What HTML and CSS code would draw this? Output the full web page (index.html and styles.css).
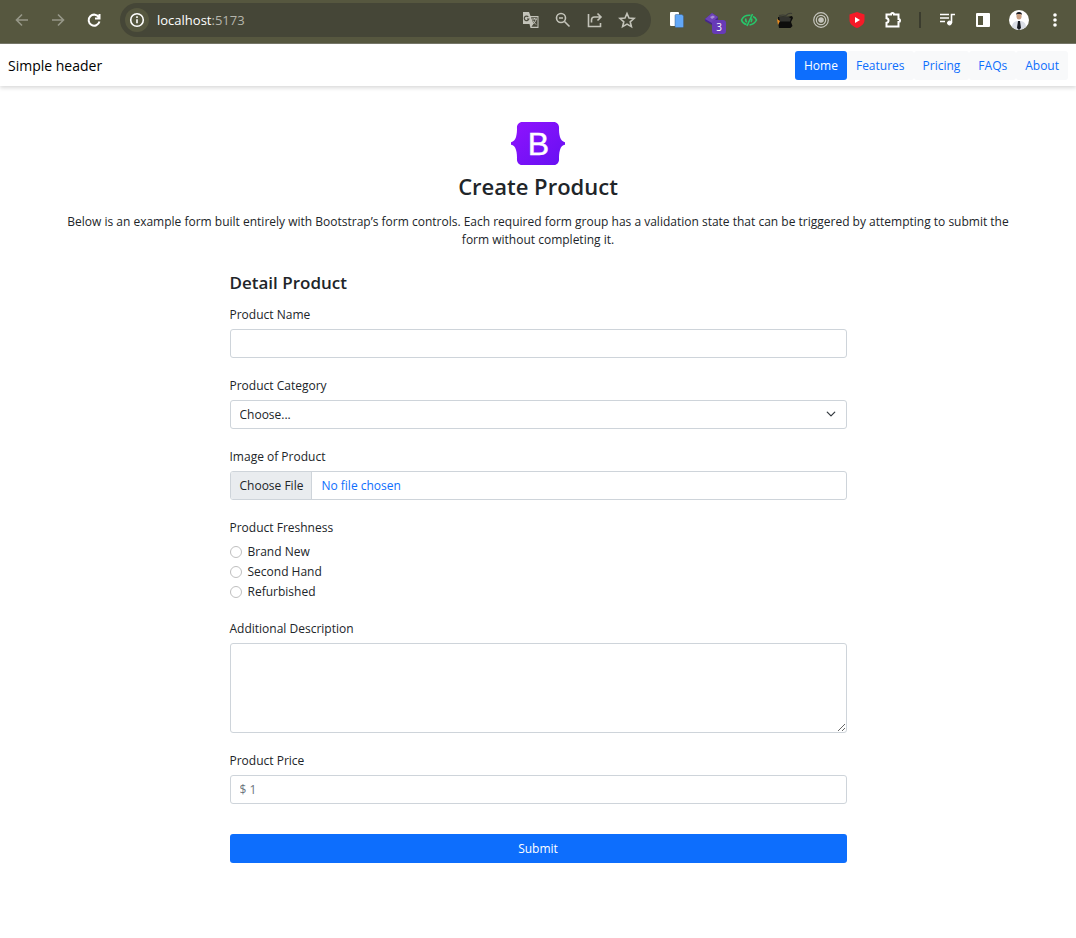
FILE: index.html
```html
<!DOCTYPE html>
<html lang="en">
<head>
<meta charset="utf-8">
<title>Create Product</title>
<link rel="stylesheet" href="styles.css">
</head>
<body>
<div class="browser">
  <div class="browser-nav">
    <button class="icon-btn dim" aria-label="Back"><svg width="16" height="16" viewBox="0 0 16 16"><path d="M14 8H3M8 2.500 2.500 8 8 13.500"/></svg></button>
    <button class="icon-btn dim" aria-label="Forward"><svg width="16" height="16" viewBox="0 0 16 16"><path d="M2 8h11M8 2.500 13.500 8 8 13.500"/></svg></button>
    <button class="icon-btn" aria-label="Reload"><svg width="16" height="16" viewBox="0 0 16 16" class="heavy"><path d="M13 5.500A5.500 5.500 0 1 0 13.500 9.500M13.500 2v4.500H9"/></svg></button>
  </div>
  <div class="omnibox">
    <button class="site-info" aria-label="Site information"><svg width="16" height="16" viewBox="0 0 16 16"><circle cx="8" cy="8" r="6.300"/><path d="M8 7.200v4M8 4.300v1.700"/></svg></button>
    <span class="url">localhost<span class="port">:5173</span></span>
    <div class="omnibox-tools">
      <button class="icon-btn soft" aria-label="Translate"><svg width="18" height="18" viewBox="0 0 18 18"><path d="M1 1h6l1.500 4H16.500v12h-8l-1-4H1z" fill="#c3c3b9" stroke="none"/><path d="M9 6.200h6.500v9.600H9.500l2-3z" fill="#4b4b3d" stroke="none"/><path d="M6.300 5.800A2.300 2.300 0 1 0 6.800 8H5" stroke="#4b4b3d" stroke-width="1.200"/><path d="M10 8h5M12.500 7v1M14.200 8c-.5 2.500-2 4-3.500 5M11 9.500c1 2 2 3 3 4" stroke-width="1"/></svg></button>
      <button class="icon-btn soft" aria-label="Zoom"><svg width="18" height="18" viewBox="0 0 18 18"><circle cx="7" cy="7" r="4.500"/><path d="m10.500 10.500 5 5M5 7h4"/></svg></button>
      <button class="icon-btn soft" aria-label="Share"><svg width="18" height="18" viewBox="0 0 18 18"><path d="M2.500 3v12.500h12V12M5.500 11.500V9q0-3 3-3h6M11.500 2.500 15 6l-3.500 3.500"/></svg></button>
      <button class="icon-btn soft" aria-label="Bookmark"><svg width="18" height="18" viewBox="0 0 18 18"><path d="m9 2.500 2 4.600 5 .4-3.800 3.300 1.200 4.900L9 13.100l-4.400 2.600 1.200-4.900L2 7.500l5-.4z"/></svg></button>
    </div>
  </div>
  <div class="extensions">
    <button class="icon-btn" aria-label="Copy pages"><svg width="18" height="18" viewBox="0 0 18 18" stroke="none"><rect x="2" y="1" width="9" height="14" rx="1" fill="#fff"/><path d="M8 3.500h6l1.500 1.500v10.500a1 1 0 0 1-1 1H8a1 1 0 0 1-1-1v-11a1 1 0 0 1 1-1z" fill="#62a8f8" stroke="#3f5f85" stroke-width=".5"/></svg></button>
    <button class="icon-btn badge-host" aria-label="Extension, 3 items"><svg width="18" height="18" viewBox="0 0 18 18" stroke="none"><path d="m1 8 7-6 6 4v5l-6 3-7-4z" fill="#45278a"/><path d="m1 8 7-6 6 4-6 6z" fill="#6d43b8"/><path d="m6 6 3-1.500L11 6 8 8z" fill="#a58cd4"/></svg><span class="badge">3</span></button>
    <button class="icon-btn" aria-label="Visibility"><svg width="18" height="18" viewBox="0 0 18 18" stroke="#27c66b"><path d="M6.500 13.500C4 13 2 10.500 1.500 9 3 5.500 6.500 4 10.500 4.300M13 5.500c2 .8 3 2.300 3.500 3.500-1.500 3-4 4.500-7 5M12.500 3 7 15M6 7.500q-1 2.500 1 3.500M11.500 7.500q1 1.500-.5 3.500"/></svg></button>
    <button class="icon-btn" aria-label="Dark animal"><svg width="18" height="18" viewBox="0 0 18 18" stroke="none"><path d="M3 4.500q4-1 7 0 3-3 6-2" stroke="#3a3b35" stroke-width="1.200"/><path d="M2 6q6-1 9 0l5-1 1 2-2 4 1.500 4-2 2H3l-1-6z" fill="#0d0d0c"/><path d="M3 5.500h9l3 2-1 3H4z" fill="#33342f"/><path d="m1 8 3 2-2 4z" fill="#e68a20"/></svg></button>
    <button class="icon-btn" aria-label="Target"><svg width="18" height="18" viewBox="0 0 18 18" stroke="#c5c5bd" class="thin"><circle cx="9" cy="9" r="7.300"/><circle cx="9" cy="9" r="4.700"/><circle cx="9" cy="9" r="2.200" fill="#c5c5bd"/></svg></button>
    <button class="icon-btn" aria-label="Video"><svg width="18" height="18" viewBox="0 0 18 18" stroke="none"><path d="m9 1 7.500 2.500V9c0 4-3.500 6.500-7.500 8-4-1.500-7.500-4-7.500-8V3.500z" fill="#f51a28"/><path d="m7 6 5 3-5 3z" fill="#fff"/></svg></button>
    <button class="icon-btn" aria-label="Extensions"><svg width="18" height="18" viewBox="0 0 18 18" class="heavy"><path d="M2.500 3.500H7a1.500 1.500 0 0 1 3 0h4.500v4.500a1.500 1.500 0 0 1 0 3v4.500h-12v-3.700q2-.3 2-2.300t-2-2.300z"/></svg></button>
    <span class="divider"></span>
    <button class="icon-btn" aria-label="Media"><svg width="18" height="18" viewBox="0 0 18 18"><path d="M2 3.500h9M2 7h9M2 10.500h5M13.500 12V3.500H17"/><circle cx="11.500" cy="12" r="2" fill="#fff" stroke-width="1"/></svg></button>
    <button class="icon-btn" aria-label="Side panel"><svg width="18" height="18" viewBox="0 0 18 18" stroke="none"><path d="M3 2h12a1 1 0 0 1 1 1v12a1 1 0 0 1-1 1H3a1 1 0 0 1-1-1V3a1 1 0 0 1 1-1zm1 3v9h5V5z" fill="#fff" fill-rule="evenodd"/></svg></button>
    <button class="icon-btn" aria-label="Profile"><svg width="20" height="20" viewBox="0 0 20 20" stroke="none"><circle cx="10" cy="10" r="10" fill="#fff"/><path d="M3 17q0-5 5-6h4q5 1 5 6a10 10 0 0 1-14 0z" fill="#d9dde5"/><ellipse cx="10" cy="6" rx="2.600" ry="3.500" fill="#c89f83"/><path d="M7 5q0-3 3-3t3 3l-1-1H8zM9 11h2l1 7-2 2-2-2z" fill="#171a21"/></svg></button>
    <button class="icon-btn" aria-label="Menu"><svg width="18" height="18" viewBox="0 0 18 18" stroke="none"><path d="M9 2.200a1.800 1.800 0 1 1 0 3.600a1.800 1.800 0 1 1 0-3.600zM9 7.200a1.800 1.800 0 1 1 0 3.600a1.800 1.800 0 1 1 0-3.600zM9 12.200a1.800 1.800 0 1 1 0 3.600a1.800 1.800 0 1 1 0-3.600z" fill="#fff"/></svg></button>
  </div>
</div>

<header class="site-header">
  <a class="brand" href="#">Simple header</a>
  <nav class="site-nav">
    <a class="nav-link active" href="#">Home</a>
    <a class="nav-link" href="#">Features</a>
    <a class="nav-link" href="#">Pricing</a>
    <a class="nav-link" href="#">FAQs</a>
    <a class="nav-link" href="#">About</a>
  </nav>
</header>

<main class="page">
  <div class="intro">
    <svg class="logo" viewBox="0 0 118 94" role="img" aria-label="Bootstrap">
      <defs><linearGradient id="violet" x1="0" y1="0" x2="1" y2="1"><stop offset="0" stop-color="#9013fe"/><stop offset="1" stop-color="#6610f2"/></linearGradient></defs>
      <path fill="url(#violet)" d="M24.509 0c-6.733 0-11.715 5.893-11.492 12.284.214 6.140-.064 14.092-2.066 20.577C8.943 39.365 5.547 43.485 0 44.014v5.972c5.547.529 8.943 4.649 10.951 11.153 2.002 6.485 2.280 14.437 2.066 20.577C12.794 88.106 17.776 94 24.510 94H93.500c6.733 0 11.714-5.893 11.491-12.284-.214-6.140.064-14.092 2.066-20.577 2.009-6.504 5.396-10.624 10.943-11.153v-5.972c-5.547-.529-8.934-4.649-10.943-11.153-2.002-6.484-2.280-14.437-2.066-20.577C105.214 5.894 100.233 0 93.500 0z"/>
      <text class="logo-letter" x="60" y="72" text-anchor="middle">B</text>
    </svg>
    <h1>Create Product</h1>
    <p>Below is an example form built entirely with Bootstrap’s form controls. Each required form group has a validation state that can be triggered by attempting to submit the form without completing it.</p>
  </div>

  <form class="product-form">
    <h2>Detail Product</h2>
    <div class="field">
      <label class="caption" for="name">Product Name</label>
      <input class="control" id="name" type="text">
    </div>
    <div class="field">
      <label class="caption" for="category">Product Category</label>
      <div class="select-wrap">
        <select class="control" id="category"><option>Choose...</option></select>
        <svg class="chevron" viewBox="0 0 16 16" aria-hidden="true"><path d="m2 5 6 6 6-6"/></svg>
      </div>
    </div>
    <div class="field">
      <label class="caption" for="image">Image of Product</label>
      <input class="control file" id="image" type="file">
    </div>
    <fieldset class="field">
      <legend class="caption">Product Freshness</legend>
      <div class="choices">
        <label class="choice"><input type="radio" name="freshness">Brand New</label>
        <label class="choice"><input type="radio" name="freshness">Second Hand</label>
        <label class="choice"><input type="radio" name="freshness">Refurbished</label>
      </div>
    </fieldset>
    <div class="field">
      <label class="caption" for="description">Additional Description</label>
      <textarea class="control area" id="description"></textarea>
    </div>
    <div class="field">
      <label class="caption" for="price">Product Price</label>
      <input class="control price" id="price" type="text" placeholder="$ 1">
    </div>
    <button class="submit" type="submit">Submit</button>
  </form>
</main>
</body>
</html>
```
FILE: styles.css
```css
* { box-sizing: border-box; }

body {
  margin: 0;
  background: #fff;
  color: #212529;
  font: 12px/18px "Open Sans", "Noto Sans", sans-serif;
}

button, input, select, textarea { font: inherit; color: inherit; }

.browser {
  display: flex;
  align-items: center;
  height: 44px;
  padding: 0 11px 4px 12px;
  background: #56573f;
  border-bottom: 1px solid #77786a;
}

.browser-nav { display: flex; gap: 16px; }

.icon-btn {
  display: flex;
  align-items: center;
  justify-content: center;
  width: 20px;
  height: 20px;
  padding: 0;
  border: 0;
  background: none;
  stroke: #fff;
}

.icon-btn svg, .site-info svg { fill: none; stroke-width: 1.6; flex: none; }
.icon-btn svg.heavy { stroke-width: 2; }
.icon-btn svg.thin { stroke-width: 1.2; }
.icon-btn.dim { stroke: #969788; }
.icon-btn.soft { stroke: #c3c3b9; }

.omnibox {
  display: flex;
  flex: 1;
  align-items: center;
  height: 34px;
  margin-left: 16px;
  padding: 0 14px 0 5px;
  border-radius: 17px;
  background: #454637;
}

.site-info {
  display: grid;
  place-items: center;
  width: 24px;
  height: 24px;
  padding: 0;
  border: 0;
  border-radius: 50%;
  background: #56573f;
  stroke: #fff;
}

.url { flex: 1; margin-left: 8px; color: #fff; font-size: 13px; }
.port { color: #b5b5ab; }
.omnibox-tools { display: flex; gap: 12px; }

.extensions { display: flex; align-items: center; gap: 16px; margin-left: 16px; }

.badge-host { position: relative; }

.badge {
  position: absolute;
  left: 9px;
  top: 10px;
  width: 14px;
  height: 14px;
  border-radius: 3px;
  background: #673ab7;
  color: #fff;
  font-size: 10px;
  line-height: 14px;
}

.divider { width: 2px; height: 16px; background: #3b3c2e; }

.site-header {
  display: flex;
  align-items: center;
  justify-content: space-between;
  padding: 7px 8px 6px;
  box-shadow: 0 2px 4px rgba(0, 0, 0, .15);
}

.brand { color: #000; font-size: 14px; text-decoration: none; }
.site-nav { display: flex; }

.nav-link {
  padding: 6px 9px 5px;
  border-radius: 3px;
  background: #f8f9fa;
  color: #0d6efd;
  text-decoration: none;
}

.nav-link.active { background: #0d6efd; color: #fff; }

.page { padding: 36px 16px 64px; }

.intro {
  max-width: 960px;
  margin: 0 auto;
  text-align: center;
}

.logo { display: block; width: 54px; height: 43px; margin: 0 auto; }
.logo-letter { fill: #fff; stroke: #fff; stroke-width: 1; font: 70px "Liberation Sans", sans-serif; }

h1, h2 { margin: 0; font-weight: 600; }
h1 { margin-top: 5px; font-size: 22px; line-height: 32px; }
h2 { margin-bottom: 12px; font-size: 17px; line-height: 22px; }
.intro p { margin: 11px 0 23px; }

.product-form { max-width: 617px; margin: 0 auto; }

.field {
  display: block;
  min-width: 0;
  margin: 0 0 19px;
  padding: 0;
  border: 0;
}

.caption { display: block; margin-bottom: 5px; padding: 0; }

.control {
  display: block;
  width: 100%;
  height: 29px;
  padding: 0 9px;
  border: 1px solid #ced4da;
  border-radius: 3px;
  background: #fff;
  appearance: none;
}

.select-wrap { position: relative; }

.chevron {
  position: absolute;
  top: 9px;
  right: 11px;
  width: 10px;
  height: 10px;
  fill: none;
  stroke: #343a40;
  stroke-width: 2;
  stroke-linecap: round;
  stroke-linejoin: round;
  pointer-events: none;
}

.file { padding: 0; color: #0d6efd; line-height: 27px; }

.file::file-selector-button {
  height: 27px;
  margin: 0 9px 0 0;
  padding: 0 8px 0 9px;
  border: 0;
  border-right: 1px solid #ced4da;
  background: #e9ecef;
  color: #212529;
  font: inherit;
}

.choices { display: grid; gap: 1px; }
.choice { display: flex; align-items: center; gap: 6px; height: 19px; }

.choice input {
  width: 12px;
  height: 12px;
  margin: 0;
  border: 1px solid #bfbfbf;
  border-radius: 50%;
  appearance: none;
}

.choice input:checked { border: 4px solid #0d6efd; }
.area { height: 90px; padding: 5px 9px; resize: vertical; }
.price::placeholder { color: #6c757d; opacity: 1; }

.submit {
  display: block;
  width: 100%;
  height: 29px;
  margin-top: 30px;
  border: 0;
  border-radius: 3px;
  background: #0d6efd;
  color: #fff;
}
```
